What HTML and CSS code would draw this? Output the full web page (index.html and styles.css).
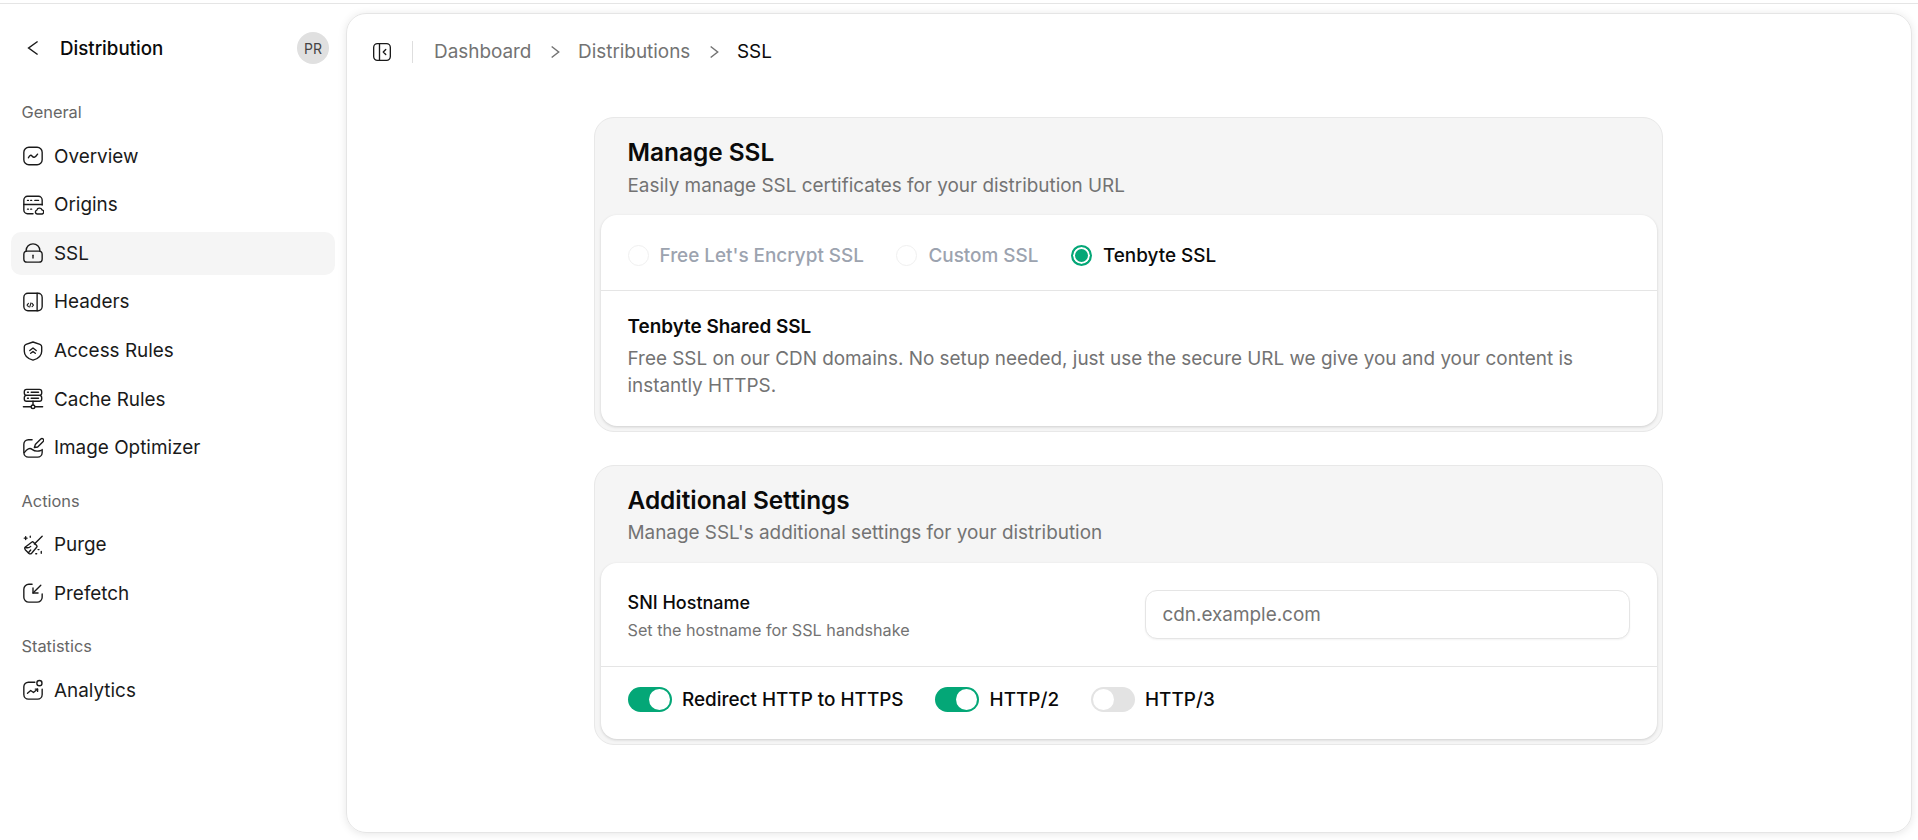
FILE: index.html
```html
<!DOCTYPE html>
<html lang="en">

<head>
    <meta charset="UTF-8">
    <meta name="viewport" content="width=device-width, initial-scale=1.0">
    <title>SSL - Distribution</title>
    <link rel="stylesheet" href="styles.css">
</head>

<body>
    <div class="topline"></div>
    <div class="app">
        <aside class="sidebar">
            <div class="side-head">
                <svg class="back" viewBox="0 0 24 24"><path d="M17 4.900L7.200 12l9.800 7.100" /></svg>
                <span class="side-title">Distribution</span>
                <span class="avatar">PR</span>
            </div>

            <div class="side-label">General</div>
            <nav class="side-group">
                <a class="side-item">
                    <svg class="ico" viewBox="0 0 24 24"><rect x="2" y="2.500" width="20" height="19" rx="5.500" /><path d="M7 14c1.400-3 2.800-3.600 4.200-1.700 1.400 1.800 3.400 1.400 5.800-2.300" /></svg>
                    Overview
                </a>
                <a class="side-item">
                    <svg class="ico" viewBox="0 0 24 24"><path d="M12 21.500H6a4 4 0 0 1-4-4V6.500a4 4 0 0 1 4-4h12a4 4 0 0 1 4 4v5.500" /><path d="M2 11.500h20" /><path d="M6 7h1M9.500 7h1M14 7h4M6 16.500h1M9.500 16.500h1" /><path d="M16.500 21.800a2.200 2.200 0 0 1-.3-4.300 3 3 0 0 1 5.600-.2 2.300 2.300 0 0 1 .2 4.500z" fill="#fff" /></svg>
                    Origins
                </a>
                <a class="side-item active">
                    <svg class="ico" viewBox="0 0 24 24"><rect x="2" y="10" width="20" height="12" rx="3.500" /><path d="M4.500 10V9.500a7.500 7.500 0 0 1 15 0V10" /><path d="M12 14.500v3" /></svg>
                    SSL
                </a>
                <a class="side-item">
                    <svg class="ico" viewBox="0 0 24 24"><rect x="2" y="2.500" width="20" height="19" rx="4.500" /><path d="M16.500 2.500v19" /><path d="M7 13.500l-1.500 1.800L7 17M11 13.500l1.500 1.800L11 17M9.800 13l-1.400 4.500" stroke-width="1.200" /></svg>
                    Headers
                </a>
                <a class="side-item">
                    <svg class="ico" viewBox="0 0 24 24"><path d="M12 2.200l7.600 2.600c1.300.5 1.900 1.300 1.900 2.600v4.800c0 4.800-4.200 8.200-9.500 9.800-5.300-1.600-9.500-5-9.500-9.800V7.400c0-1.300.6-2.100 1.900-2.600z" /><path d="M8.500 11.500L12 8.800l3.500 2.700M9.500 14.500l2.500-1.900 2.500 1.900" /></svg>
                    Access Rules
                </a>
                <a class="side-item">
                    <svg class="ico" viewBox="0 0 24 24"><rect x="2.500" y="1.500" width="19" height="6.500" rx="2.500" /><rect x="2.500" y="8" width="19" height="6.500" rx="2.500" /><path d="M6 4.700h1M10 4.700h8M6 11.200h1M10 11.200h8" /><path d="M12 14.500v4M1.500 20.500h8M14.500 20.500h8" /><circle cx="12" cy="20.500" r="2" /></svg>
                    Cache Rules
                </a>
                <a class="side-item">
                    <svg class="ico" viewBox="0 0 24 24"><path d="M11 3H7a5 5 0 0 0-5 5v9a5 5 0 0 0 5 5h10a5 5 0 0 0 5-5v-3.500" /><path d="M2.500 17c3-4 6-5.500 8.500-3.500 2.400 1.900 5 3 10 1" /><path d="M13.500 11.500l1-3.200 6-6a1.800 1.800 0 0 1 2.600 2.600l-6 6z" /></svg>
                    Image Optimizer
                </a>
            </nav>

            <div class="side-label spaced">Actions</div>
            <nav class="side-group">
                <a class="side-item">
                    <svg class="ico" viewBox="0 0 24 24"><path d="M22 2.500l-8.500 8.500" /><path d="M12.500 9l3.500 3.500a1.500 1.500 0 0 1 0 2L10.500 21c-1 1-2.200.8-3.200-.1L3.800 17.400c-.9-1-1.100-2.200-.1-3.200L10.500 9a1.500 1.500 0 0 1 2 0z" /><path d="M3.500 14.500c2.500 1 4.500.5 6-1M7 20.500l2.500-3M2.500 4.500h3M4 3v3M9 2.500v1M17.500 17h1M21 19v2M15 21.500h1" /></svg>
                    Purge
                </a>
                <a class="side-item">
                    <svg class="ico" viewBox="0 0 24 24"><path d="M11 2.500H7.500A5.500 5.500 0 0 0 2 8v8.500A5.500 5.500 0 0 0 7.500 22h9a5.500 5.500 0 0 0 5.500-5.500V13" /><path d="M20.500 3.500L12 12" /><path d="M12 6.500V12h5.500" /></svg>
                    Prefetch
                </a>
            </nav>

            <div class="side-label spaced">Statistics</div>
            <nav class="side-group">
                <a class="side-item">
                    <svg class="ico" viewBox="0 0 24 24"><path d="M14 3.500H7A5 5 0 0 0 2 8.500v8.500a5 5 0 0 0 5 5h10a5 5 0 0 0 5-5v-6" /><circle cx="19" cy="4.500" r="2.800" /><path d="M6 15.500l3.500-3 3 2.200 4.500-3.700" /><path d="M14.500 11h2.500v2.500" /></svg>
                    Analytics
                </a>
            </nav>
        </aside>

        <main class="panel">
            <header class="crumbs">
                <svg class="toggle-side" viewBox="0 0 24 24"><rect x="2" y="2" width="20" height="20" rx="4.500" /><path d="M9 2v20" /><path d="M16.500 9l-3 3 3 3" /></svg>
                <span class="crumb-sep"></span>
                <span class="crumb">Dashboard</span>
                <svg class="crumb-arrow" viewBox="0 0 24 24"><path d="M7 3.750l10.500 8.250-10.500 8.250" /></svg>
                <span class="crumb">Distributions</span>
                <svg class="crumb-arrow" viewBox="0 0 24 24"><path d="M7 3.750l10.500 8.250-10.500 8.250" /></svg>
                <span class="crumb current">SSL</span>
            </header>

            <div class="content">
                <section class="card">
                    <div class="card-head">
                        <h2>Manage SSL</h2>
                        <p>Easily manage SSL certificates for your distribution URL</p>
                    </div>
                    <div class="card-body">
                        <div class="radio-row">
                            <label class="radio disabled"><span class="dot"></span>Free Let's Encrypt SSL</label>
                            <label class="radio disabled"><span class="dot"></span>Custom SSL</label>
                            <label class="radio on"><span class="dot"></span>Tenbyte SSL</label>
                        </div>
                        <div class="info">
                            <h3>Tenbyte Shared SSL</h3>
                            <p>Free SSL on our CDN domains. No setup needed, just use the secure URL we give you and your content is instantly HTTPS.</p>
                        </div>
                    </div>
                </section>

                <section class="card">
                    <div class="card-head">
                        <h2>Additional Settings</h2>
                        <p>Manage SSL's additional settings for your distribution</p>
                    </div>
                    <div class="card-body">
                        <div class="sni-row">
                            <div class="sni-text">
                                <div class="sni-title">SNI Hostname</div>
                                <div class="sni-sub">Set the hostname for SSL handshake</div>
                            </div>
                            <input class="sni-input" type="text" placeholder="cdn.example.com">
                        </div>
                        <div class="switch-row">
                            <label class="switch on"><span class="track"><span class="thumb"></span></span>Redirect HTTP to HTTPS</label>
                            <label class="switch on"><span class="track"><span class="thumb"></span></span>HTTP/2</label>
                            <label class="switch"><span class="track"><span class="thumb"></span></span>HTTP/3</label>
                        </div>
                    </div>
                </section>
            </div>
        </main>
    </div>
</body>

</html>
```
FILE: styles.css
```css
* {
    box-sizing: border-box;
}

html,
body {
    margin: 0;
    height: 100%;
    overflow: hidden;
    background: #fff;
    color: #0a0a0a;
    font-family: Inter, "Liberation Sans", sans-serif;
}

.topline {
    height: 4px;
    border-bottom: 1px solid #e5e5e5;
}

.app {
    display: flex;
    height: 836px;
    padding: 9px 6px 7px 0;
}

/* sidebar */

.sidebar {
    width: 347px;
    flex-shrink: 0;
    padding: 19px 12px 0 11px;
}

.side-head {
    display: flex;
    align-items: center;
    height: 32px;
    padding: 0 6px 0 10.500px;
    margin-bottom: 38.200px;
}

.back {
    width: 22px;
    height: 22px;
    fill: none;
    stroke: #1a1a1a;
    stroke-width: 1.600;
    margin-right: 16.500px;
}

.side-title {
    font-size: 18.720px;
    font-weight: 500;
    flex: 1;
}

.avatar {
    width: 32px;
    height: 32px;
    border-radius: 50%;
    background: #e0e0e0;
    color: #444;
    font-size: 14px;
    display: flex;
    align-items: center;
    justify-content: center;
}

.side-label {
    font-size: 16.380px;
    line-height: 20px;
    color: #666;
    padding-left: 10.500px;
    margin-bottom: 12.500px;
}

.side-label.spaced {
    margin-top: 21.500px;
}

.side-group {
    display: flex;
    flex-direction: column;
    gap: 5.600px;
}

.side-item {
    display: flex;
    align-items: center;
    gap: 10px;
    height: 43px;
    padding-left: 11px;
    border-radius: 10px;
    font-size: 18.900px;
    color: #1a1a1a;
}

.side-item.active {
    background: #f5f5f5;
}

.ico {
    width: 22px;
    height: 22px;
    flex-shrink: 0;
    fill: none;
    stroke: #1a1a1a;
    stroke-width: 1.500;
    stroke-linecap: round;
    stroke-linejoin: round;
}

/* main panel */

.panel {
    flex: 1;
    min-width: 0;
    padding-right: 2px;
    border: 1px solid #e5e5e5;
    border-radius: 20px;
    box-shadow: 0 1px 8px rgba(0, 0, 0, 0.1);
    margin-left: -1px;
}

.crumbs {
    display: flex;
    align-items: center;
    height: 56px;
    margin-top: 9.500px;
    padding-left: 25px;
}

.toggle-side {
    width: 20px;
    height: 20px;
    fill: none;
    stroke: #1a1a1a;
    stroke-width: 1.600;
    stroke-linecap: round;
    stroke-linejoin: round;
}

.crumb-sep {
    width: 1px;
    height: 22px;
    background: #dedede;
    margin: 0 21px 0 20px;
}

.crumb {
    font-size: 18.900px;
    color: #737373;
}

.crumb.current {
    color: #0a0a0a;
}

.crumb-arrow {
    width: 16px;
    height: 16px;
    fill: none;
    stroke: #737373;
    stroke-width: 2.200;
    margin: 0 15.300px;
}

.content {
    width: 1069px;
    margin: 37.500px auto 0;
    display: flex;
    flex-direction: column;
    gap: 33px;
}

.card {
    background: #f5f5f5;
    border: 1px solid #e8e8e8;
    border-radius: 20px;
    padding: 0 5px 5px 6px;
}

.card-head {
    padding: 19px 0 0 27px;
    height: 97px;
}

.card-head h2 {
    margin: 0;
    font-size: 24.400px;
    font-weight: 600;
    line-height: 30px;
}

.card-head p {
    margin: 5.800px 0 0;
    font-size: 18.900px;
    line-height: 26px;
    color: #737373;
}

.card-body {
    background: #fff;
    border-radius: 16px;
    box-shadow: 0 1px 3px rgba(0, 0, 0, 0.16);
}

.radio-row {
    display: flex;
    align-items: center;
    gap: 32.500px;
    height: 76px;
    padding: 5px 0 0 27px;
    border-bottom: 1px solid #e5e5e5;
}

.radio {
    display: flex;
    align-items: center;
    gap: 11px;
    font-size: 18.900px;
    font-weight: 500;
}

.radio.disabled {
    color: #9ca3af;
}

.dot {
    width: 21px;
    height: 21px;
    border-radius: 50%;
    border: 1px solid #f0f0f0;
    background: #fff;
}

.radio.on .dot {
    border: 2px solid #04a777;
    box-shadow: inset 0 0 0 2px #fff;
    background: #04a777;
}

.info {
    padding: 24px 27px 26.700px;
}

.info h3 {
    margin: 0;
    font-size: 18.900px;
    font-weight: 600;
    line-height: 24px;
}

.info p {
    margin: 6px 0 0;
    font-size: 18.900px;
    line-height: 27px;
    color: #737373;
}

.sni-row {
    display: flex;
    align-items: center;
    justify-content: space-between;
    height: 104px;
    padding: 0 27px;
    border-bottom: 1px solid #e5e5e5;
}

.sni-text {
    padding-top: 3px;
}

.sni-title {
    font-size: 18px;
    font-weight: 500;
    line-height: 24px;
}

.sni-sub {
    margin-top: 4px;
    font-size: 16.200px;
    line-height: 22px;
    color: #737373;
}

.sni-input {
    width: 485px;
    height: 49px;
    padding: 0 17px;
    border: 1px solid #e5e5e5;
    border-radius: 12px;
    outline: none;
    font-family: Inter, "Liberation Sans", sans-serif;
    font-size: 18.900px;
    box-shadow: 0 1px 2px rgba(0, 0, 0, 0.05);
}

.sni-input::placeholder {
    color: #737373;
    opacity: 1;
}

.switch-row {
    display: flex;
    align-items: center;
    gap: 31.500px;
    height: 72.500px;
    padding: 0 0 7px 27px;
}

.switch {
    display: flex;
    align-items: center;
    gap: 10.500px;
    font-size: 18.900px;
    font-weight: 500;
}

.track {
    display: flex;
    align-items: center;
    width: 44px;
    height: 25px;
    padding: 2px;
    border-radius: 13px;
    background: #e3e3e3;
}

.thumb {
    width: 21px;
    height: 21px;
    border-radius: 50%;
    background: #fff;
}

.switch.on .track {
    background: #04a777;
    justify-content: flex-end;
}
```
